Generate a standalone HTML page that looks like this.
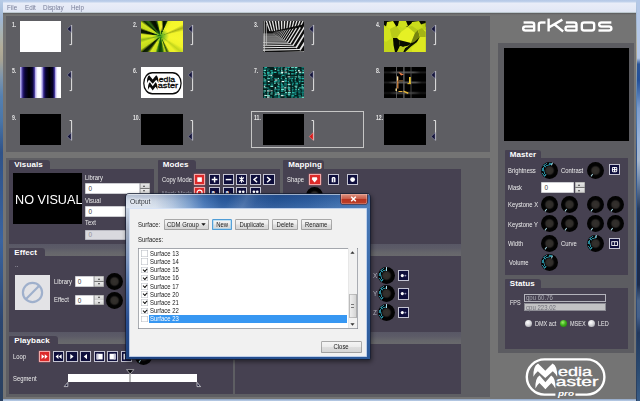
<!DOCTYPE html>
<html>
<head>
<meta charset="utf-8">
<title>MediaMaster</title>
<style>
html,body{margin:0;padding:0;}
body{width:640px;height:401px;overflow:hidden;position:relative;background:#6d6d6d;font-family:"Liberation Sans",sans-serif;font-size:7px;color:#eee;}
.a{position:absolute;}
#desk{left:0;top:0;width:640px;height:401px;background:linear-gradient(180deg,#b7cbe6 0%,#9fb6d4 5%,#a9b4b4 8%,#b3ad98 12%,#a8a494 15%,#7f96ac 19%,#5580b0 24%,#4a76a8 30%,#2f5288 38%,#335a94 48%,#3a64a0 60%,#33568a 70%,#2b4670 80%,#2a4468 88%,#2a4060 100%);}
#deskr{left:636.5px;top:0;width:3.5px;height:401px;background:linear-gradient(180deg,#b4c8e8 0%,#b4c8e8 14.5%,#2a5496 16%,#23509a 20%,#4670b0 23%,#7c9ccc 27%,#9ab4d8 35%,#a8b8cc 40%,#7088a8 45%,#283c5c 52%,#1c2c4c 62%,#1c2c4c 71%,#4a6488 75%,#44608a 79%,#22385c 83%,#2a4a70 92%,#3a5c86 100%);}
#frame{left:2.8px;top:0;width:633.7px;height:401px;background:#747474;}
#win{left:2.8px;top:12.5px;width:633.7px;height:386.7px;background:linear-gradient(180deg,#58585a 0,#6e6e6e 1.2px,#747474 2.2px,#747474 100%);}
#menubar{z-index:2;left:2.8px;top:0;width:633.7px;height:12.5px;background:linear-gradient(180deg,#b4c8e6 0,#c2d3ec 2px,#e9edf8 3px,#e4e9f6 9px,#dfe5f3 12px,#9aa 13px);}
#menubar span{position:absolute;top:3.8px;font-size:7px;line-height:8px;color:#777d98;transform-origin:0 50%;transform:scaleX(.9);}
.panel{background:#5e5e63;}
.body{background:#464151;}
.tab{background:#464151;border-radius:1px 3px 0 0;height:8.5px;}
.tab b{position:absolute;left:5.2px;top:0px;font-size:8px;line-height:9px;color:#fff;white-space:nowrap;letter-spacing:.12px;}
.num{font-size:6.6px;font-weight:bold;line-height:8px;color:#e6e6e6;white-space:nowrap;transform-origin:0 50%;transform:scaleX(.78);}
.lbl{white-space:nowrap;font-size:7px;line-height:8px;color:#ececec;transform-origin:0 50%;transform:scaleX(.84);}

.tab{height:9.3px !important;}
.inp{background:#fff;box-shadow:inset 0 0 0 .5px #9a9aa4;}
.inp i{position:absolute;left:3.2px;top:50%;margin-top:-3.4px;font-style:normal;font-size:6.4px;line-height:8px;color:#3a3a3a;}
.inp.dis{background:#d9d9de;} .inp.dis i{color:#909098;}
.spin{background:linear-gradient(180deg,#ececec 0,#cfcfcf 47%,#777 48%,#777 52%,#ececec 53%,#cdcdcd 100%);box-shadow:inset 0 0 0 .5px #8a8a8a;}
.spin:before,.spin:after{content:"";position:absolute;left:50%;margin-left:-1.5px;border:1.5px solid transparent;}
.spin:before{top:0.2px;border-bottom:2px solid #444;border-top:0;margin-top:1.4px}
.spin:after{bottom:1.6px;border-top:2px solid #444;border-bottom:0;}
.btn{width:9.2px;height:9.2px;background:#0e0e3c;border:.7px solid #c4c4d2;box-sizing:content-box;}
.btn.red{background:#dc2a2a;border-color:#f4a8a8;box-shadow:0 0 1.5px rgba(255,120,120,.8);}
.btn svg{position:absolute;left:0;top:0;width:9.2px;height:9.2px;}
.knob{width:17px;height:17px;border-radius:50%;--v:0;background:
 radial-gradient(circle at 50% 50%,#34312e 0,#2f2c29 3.4px,#0b0b0b 4.8px,rgba(8,8,8,0) 5.4px),
 radial-gradient(circle at 50% 50%,rgba(3,3,3,0) 7.7px,#030303 8.1px),
 repeating-conic-gradient(from 215deg,rgba(3,3,3,0) 0deg,rgba(3,3,3,0) 5deg,#030303 6deg,#030303 9deg,rgba(3,3,3,0) 10deg),
 conic-gradient(from 215deg,#27889a 0deg,#27889a calc(var(--v)*290deg),#030303 calc(var(--v)*290deg + 1deg),#030303 360deg);}
.knob.np:after{display:none}
.knob:after{content:"";position:absolute;left:8px;top:.6px;width:1px;height:3.4px;background:#a8d8e6;transform-origin:.5px 7.9px;transform:rotate(calc(215deg + var(--v)*290deg));}

#dlg{left:126.2px;top:193.7px;width:243.6px;height:165.7px;border-radius:3.2px 3.2px 1.2px 1.2px;box-shadow:0 0 0 .7px rgba(20,30,52,.95),1px 2px 4px 1px rgba(0,0,0,.45);overflow:hidden;
 background:linear-gradient(180deg,rgba(10,30,80,.22) 0,rgba(10,30,80,.06) 7px,rgba(255,255,255,.06) 14px,rgba(255,255,255,0) 15px),linear-gradient(90deg,#dfe7f2 0,#d9e2ee 12%,#b4c8e2 19%,#7fa3d0 26%,#4a7aba 32%,#2e5fa2 39%,#27569a 50%,#285798 62%,#2f60a2 75%,#3f70b0 88%,#4a7ab6 100%);}
#dlg .lb{left:0;top:14px;width:4px;bottom:0;background:linear-gradient(180deg,#cdd8e8 0,#a4aec0 15%,#7c94bc 35%,#4a6eaa 55%,#2a4e90 75%,#1d417c 100%);}
#dlg .bb{left:0;bottom:0;width:100%;height:4px;background:linear-gradient(90deg,#1d417c 0,#214788 30%,#265090 60%,#2c5a9a 100%);}
#dlg .rb{right:0;top:14px;width:4px;bottom:0;background:linear-gradient(180deg,#4a7ab6 0,#3c6cac 40%,#2c5a9a 100%);}
#dlg .hl{left:0;top:0;width:100%;height:1px;background:rgba(255,255,255,.55);}
#dlg .gl{left:70px;top:0;width:110px;height:14.6px;background:linear-gradient(115deg,rgba(255,255,255,0) 30%,rgba(255,255,255,.16) 45%,rgba(255,255,255,.05) 55%,rgba(255,255,255,0) 70%);}
#cl{left:129.9px;top:209px;width:236.2px;height:146.7px;background:#f1f1f1;box-shadow:0 0 0 .9px rgba(214,228,248,.95);}
.dt{white-space:nowrap;font-size:7px;line-height:8px;color:#1c1c1c;transform-origin:0 50%;transform:scaleX(.85);}
.pb{background:linear-gradient(180deg,#f6f6f6 0,#ececec 48%,#dedede 52%,#d4d4d4 100%);border-radius:1.6px;box-shadow:inset 0 0 0 .7px #8e8e8e;}
.pb span{position:absolute;left:0;width:117.6%;text-align:center;top:50%;margin-top:-3.5px;font-size:7px;line-height:8px;color:#1c1c1c;transform-origin:0 50%;transform:scaleX(.85);white-space:nowrap;}
.pb.def{box-shadow:inset 0 0 0 .7px #3c8ccc,inset 0 0 0 1.5px #8fd0f4;}
.cb{width:6.6px;height:6.6px;background:#fff;box-shadow:inset 0 0 0 .6px #b8bcc4;}
.cb.on:after{content:"";position:absolute;left:1.5px;top:1px;width:3.4px;height:1.9px;border-left:1.3px solid #111;border-bottom:1.3px solid #111;transform:rotate(-48deg);transform-origin:50% 50%;}
</style>
</head>
<body>
<div id="desk" class="a"></div><div id="deskr" class="a"></div>
<div id="frame" class="a"></div>
<div class="a" style="left:2.8px;top:399.2px;width:633.7px;height:1.8px;background:linear-gradient(180deg,#8fa4c4,#bcd0ea);"></div>
<div id="menubar" class="a"><span style="left:4.5px">File</span><span style="left:22px">Edit</span><span style="left:40.5px">Display</span><span style="left:68.5px">Help</span></div>
<div id="win" class="a"></div>

<!-- top grid panel -->
<div class="a panel" id="grid" style="left:5.8px;top:16px;width:484.5px;height:135.8px;"></div>

<!-- thumbnails -->
<div class="a" style="left:251.3px;top:111.3px;width:110.6px;height:34.8px;border:1px solid #c6c6c6;"></div>
<div class="a" style="left:20.2px;top:21px;width:41.3px;height:31.2px;"><span class="a num" style="left:-8.7px;top:0.2px;">1.</span><div class="a" style="left:0;top:0;width:41.3px;height:31.2px;overflow:hidden;"><div class="a" style="left:0;top:0;width:100%;height:100%;background:#fff"></div></div><svg class="a" style="left:45.4px;top:3px" width="8" height="22" viewBox="0 0 8 22"><path d="M5.6 1 V20.6 H3.6" fill="none" stroke="#e4e4e4" stroke-width="1"/><path d="M5.2 1.2 L1.2 5 L5.2 8.6Z" fill="#14143a" stroke="#9a9ab4" stroke-width=".5"/></svg></div>
<div class="a" style="left:141.3px;top:21px;width:41.3px;height:31.2px;"><span class="a num" style="left:-8.7px;top:0.2px;">2.</span><div class="a" style="left:0;top:0;width:41.3px;height:31.2px;overflow:hidden;"><div class="a" style="left:0;top:0;width:100%;height:100%;background:conic-gradient(from 0deg at 47% 48%,#e4ee20 0deg,#b9d21a 4deg,#0b1a02 9deg,#050c00 17deg,#10300a 22deg,#dfe91f 27deg,#f4f62a 40deg,#f6f72c 62deg,#a9b416 70deg,#f2f52a 78deg,#f6f72c 100deg,#eff329 118deg,#c3d61c 128deg,#eef228 138deg,#e8ef26 150deg,#274f0b 158deg,#c9e01e 165deg,#1a5a0e 174deg,#0f3a08 184deg,#2c7214 192deg,#c9e01e 199deg,#dcea22 212deg,#132a04 221deg,#0a1802 228deg,#c4dc1c 236deg,#d4e820 250deg,#8fb414 258deg,#d8ea20 266deg,#dcec22 274deg,#091a02 280deg,#060f00 287deg,#c0da1c 293deg,#d2e61e 304deg,#0c2a06 311deg,#2e6a12 319deg,#081602 327deg,#040a00 338deg,#1c4a0c 344deg,#d0e21c 350deg,#e4ee20 360deg)"></div><div class="a" style="left:0;top:0;width:100%;height:100%;background:radial-gradient(ellipse 20% 24% at 47% 48%,rgba(46,150,34,.9),rgba(46,150,34,.35) 60%,rgba(40,140,30,0))"></div><div class="a" style="left:19px;top:1px;width:3px;height:9px;background:radial-gradient(ellipse at 50% 50%,rgba(250,240,60,.95),rgba(250,240,60,0))"></div></div><svg class="a" style="left:45.4px;top:3px" width="8" height="22" viewBox="0 0 8 22"><path d="M5.6 1 V20.6 H3.6" fill="none" stroke="#e4e4e4" stroke-width="1"/><path d="M5.2 1.2 L1.2 5 L5.2 8.6Z" fill="#14143a" stroke="#9a9ab4" stroke-width=".5"/></svg></div>
<div class="a" style="left:262.9px;top:21px;width:41.3px;height:31.2px;"><span class="a num" style="left:-8.7px;top:0.2px;">3.</span><div class="a" style="left:0;top:0;width:41.3px;height:31.2px;overflow:hidden;"><svg class="a" style="left:0;top:0" width="41.7" height="31.2" viewBox="0 0 41.7 31.2"><rect width="41.7" height="31.2" fill="#0c0c0c"/><path d="M2.60 0 L4.05 0 L7.60 10.5 L6.50 10.5Z" fill="#e2e2e2"/><path d="M5.65 0 L7.10 0 L9.95 10.5 L8.85 10.5Z" fill="#e2e2e2"/><path d="M8.70 0 L10.15 0 L12.30 10.5 L11.20 10.5Z" fill="#e2e2e2"/><path d="M11.75 0 L13.20 0 L14.65 10.5 L13.55 10.5Z" fill="#e2e2e2"/><path d="M14.80 0 L16.25 0 L17.00 10.5 L15.90 10.5Z" fill="#e2e2e2"/><path d="M17.85 0 L19.30 0 L19.35 10.5 L18.25 10.5Z" fill="#e2e2e2"/><path d="M20.90 0 L22.35 0 L21.70 10.5 L20.60 10.5Z" fill="#e2e2e2"/><path d="M23.95 0 L25.40 0 L24.05 10.5 L22.95 10.5Z" fill="#e2e2e2"/><path d="M27.00 0 L28.45 0 L26.40 10.5 L25.30 10.5Z" fill="#e2e2e2"/><path d="M30.05 0 L31.50 0 L28.75 10.5 L27.65 10.5Z" fill="#e2e2e2"/><path d="M33.10 0 L34.55 0 L31.10 10.5 L30.00 10.5Z" fill="#e2e2e2"/><path d="M36.15 0 L37.60 0 L33.45 10.5 L32.35 10.5Z" fill="#e2e2e2"/><path d="M39.20 0 L40.65 0 L35.80 10.5 L34.70 10.5Z" fill="#e2e2e2"/><path d="M0 9.6 L9 10.4 L41.7 3 L41.7 31.2 L0 31.2Z" fill="#0c0c0c"/><path d="M-1.00 35.28 L47.01 34.35" stroke="#ececec" stroke-width="1.54" fill="none"/><path d="M47.01 34.35 L66.93 2.22" stroke="#e6e6e6" stroke-width="2.47" fill="none" stroke-linecap="square"/><path d="M-1.00 32.00 L41.70 31.20" stroke="#ececec" stroke-width="1.34" fill="none"/><path d="M41.70 31.20 L58.87 3.50" stroke="#e6e6e6" stroke-width="2.15" fill="none" stroke-linecap="square"/><path d="M-1.00 29.23 L37.22 28.54" stroke="#ececec" stroke-width="1.18" fill="none"/><path d="M37.22 28.54 L52.07 4.58" stroke="#e6e6e6" stroke-width="1.88" fill="none" stroke-linecap="square"/><path d="M-1.00 26.88 L33.40 26.27" stroke="#ececec" stroke-width="1.04" fill="none"/><path d="M33.40 26.27 L46.28 5.50" stroke="#e6e6e6" stroke-width="1.65" fill="none" stroke-linecap="square"/><path d="M-1.00 24.82 L30.08 24.30" stroke="#ececec" stroke-width="0.91" fill="none"/><path d="M30.08 24.30 L41.24 6.30" stroke="#e6e6e6" stroke-width="1.45" fill="none" stroke-linecap="square"/><path d="M-1.00 23.08 L27.26 22.63" stroke="#ececec" stroke-width="0.81" fill="none"/><path d="M27.26 22.63 L36.96 6.98" stroke="#e6e6e6" stroke-width="1.28" fill="none" stroke-linecap="square"/><path d="M-1.00 21.54 L24.77 21.15" stroke="#ececec" stroke-width="0.72" fill="none"/><path d="M24.77 21.15 L33.18 7.58" stroke="#e6e6e6" stroke-width="1.13" fill="none" stroke-linecap="square"/><path d="M-1.00 20.21 L22.61 19.87" stroke="#ececec" stroke-width="0.64" fill="none"/><path d="M22.61 19.87 L29.91 8.10" stroke="#e6e6e6" stroke-width="1.00" fill="none" stroke-linecap="square"/><path d="M-1.00 19.09 L20.78 18.79" stroke="#ececec" stroke-width="0.57" fill="none"/><path d="M20.78 18.79 L27.14 8.54" stroke="#e6e6e6" stroke-width="0.89" fill="none" stroke-linecap="square"/><path d="M-1.00 18.06 L19.12 17.80" stroke="#ececec" stroke-width="0.51" fill="none"/><path d="M19.12 17.80 L24.62 8.94" stroke="#e6e6e6" stroke-width="0.79" fill="none" stroke-linecap="square"/><path d="M-1.00 17.14 L17.63 16.92" stroke="#ececec" stroke-width="0.46" fill="none"/><path d="M17.63 16.92 L22.35 9.30" stroke="#e6e6e6" stroke-width="0.70" fill="none" stroke-linecap="square"/><path d="M-1.00 16.32 L16.30 16.13" stroke="#ececec" stroke-width="0.41" fill="none"/><path d="M16.30 16.13 L20.34 9.62" stroke="#e6e6e6" stroke-width="0.62" fill="none" stroke-linecap="square"/><path d="M-1.00 15.60 L15.14 15.44" stroke="#ececec" stroke-width="0.36" fill="none"/><path d="M15.14 15.44 L18.57 9.90" stroke="#e6e6e6" stroke-width="0.55" fill="none" stroke-linecap="square"/><path d="M-1.00 14.88 L13.98 14.75" stroke="#ececec" stroke-width="0.32" fill="none"/><path d="M13.98 14.75 L16.81 10.18" stroke="#e6e6e6" stroke-width="0.48" fill="none" stroke-linecap="square"/><path d="M-1.00 14.27 L12.98 14.16" stroke="#ececec" stroke-width="0.28" fill="none"/><path d="M12.98 14.16 L15.30 10.42" stroke="#e6e6e6" stroke-width="0.42" fill="none" stroke-linecap="square"/><path d="M-1.00 13.65 L11.99 13.57" stroke="#ececec" stroke-width="0.25" fill="none"/><path d="M11.99 13.57 L13.79 10.66" stroke="#e6e6e6" stroke-width="0.36" fill="none" stroke-linecap="square"/><path d="M-1.00 13.14 L11.16 13.08" stroke="#ececec" stroke-width="0.22" fill="none"/><path d="M11.16 13.08 L12.53 10.86" stroke="#e6e6e6" stroke-width="0.31" fill="none" stroke-linecap="square"/><path d="M-1.00 12.63 L10.33 12.58" stroke="#ececec" stroke-width="0.19" fill="none"/><path d="M10.33 12.58 L11.27 11.06" stroke="#e6e6e6" stroke-width="0.26" fill="none" stroke-linecap="square"/><path d="M1.2 0V31.2" stroke="#ddd" stroke-width=".9"/><path d="M3.4 3V24" stroke="#ccc" stroke-width=".7"/></svg></div><svg class="a" style="left:45.4px;top:3px" width="8" height="22" viewBox="0 0 8 22"><path d="M5.6 1 V20.6 H3.6" fill="none" stroke="#e4e4e4" stroke-width="1"/><path d="M5.2 1.2 L1.2 5 L5.2 8.6Z" fill="#14143a" stroke="#9a9ab4" stroke-width=".5"/></svg></div>
<div class="a" style="left:384.3px;top:21px;width:41.3px;height:31.2px;"><span class="a num" style="left:-8.7px;top:0.2px;">4.</span><div class="a" style="left:0;top:0;width:41.3px;height:31.2px;overflow:hidden;"><svg class="a" style="left:0;top:0" width="41.7" height="31.2" viewBox="0 0 41.7 31.2"><rect width="41.7" height="31.2" fill="#c6da1c"/>
<polygon points="0,0 41.7,0 41.7,6 38,3 33,7 28,2 23,6 17,2 12,6 7,2 3,6 0,4" fill="#050800"/>
<polygon points="3,1 9,0 12,5 6,8 2,6" fill="#dbe81e"/><polygon points="15,0 22,0 24,5 18,7 14,4" fill="#cfe01c"/><polygon points="28,1 35,0 38,5 32,8 27,5" fill="#cbdc1c"/><polygon points="38,3 41.7,2 41.7,9 39,8" fill="#b9cb18"/>
<polygon points="0,6 6,8 8,17 2,21 0,20" fill="#d2e31e"/><polygon points="6,8 12,5 17,11 13,17 8,17" fill="#b9ca18"/>
<polygon points="17,11 24,6 31,12 27,22 15,19 13,17" fill="#e6f024"/><polygon points="24,6 28,5 34,9 31,12" fill="#b6c818"/>
<polygon points="31,12 34,9 36,16 30,21 27,22" fill="#76840e"/>
<polygon points="9,17 13,17 15,19 16,25 13,31.2 11,31.2 9.5,24" fill="#080a00"/><polygon points="15,19 27,22 25,24.5 19,26 16,25" fill="#0a0c00"/>
<polygon points="27,22 30,21 36,16 33,21 27,25.5 21,31.2 19,31.2 21,27 25,24.5" fill="#0c1000"/><polygon points="16,25 19,26 25,24.5 21,27 19,31.2 13,31.2" fill="#b9cb18"/>
<polygon points="34,9 41.7,9 41.7,31.2 28,31.2 27,27 33,22 36,16" fill="#dde820"/>
<polygon points="34,9 38,7 41.7,11 41.7,16 36,16" fill="#a4b414"/>
<polygon points="0,20 2,21 8,17 7,24 9,31.2 0,31.2" fill="#c3d51a"/><polygon points="22,31.2 27,27 28,31.2" fill="#d0e01e"/>
</svg></div><svg class="a" style="left:45.4px;top:3px" width="8" height="22" viewBox="0 0 8 22"><path d="M5.6 1 V20.6 H3.6" fill="none" stroke="#e4e4e4" stroke-width="1"/><path d="M5.2 1.2 L1.2 5 L5.2 8.6Z" fill="#14143a" stroke="#9a9ab4" stroke-width=".5"/></svg></div>
<div class="a" style="left:20.2px;top:67px;width:41.3px;height:31.2px;"><span class="a num" style="left:-8.7px;top:0.2px;">5.</span><div class="a" style="left:0;top:0;width:41.3px;height:31.2px;overflow:hidden;"><div class="a" style="left:0;top:0;width:100%;height:100%;background:linear-gradient(90deg,#c9c4f0 0,#8f86d6 3%,#2a1c7a 7%,#0a0434 12%,#000 22%,#05022a 30%,#3a2c90 35%,#c0b8f0 38%,#fbfbff 43%,#fbfbff 50%,#b8b0ec 54%,#2e2088 58%,#08032c 63%,#000 72%,#06022c 80%,#3a2c92 84%,#c4bcf2 87%,#fcfcff 91%,#fff 100%)"></div></div><svg class="a" style="left:45.4px;top:3px" width="8" height="22" viewBox="0 0 8 22"><path d="M5.6 1 V20.6 H3.6" fill="none" stroke="#e4e4e4" stroke-width="1"/><path d="M5.2 1.2 L1.2 5 L5.2 8.6Z" fill="#14143a" stroke="#9a9ab4" stroke-width=".5"/></svg></div>
<div class="a" style="left:141.3px;top:67px;width:41.3px;height:31.2px;"><span class="a num" style="left:-8.7px;top:0.2px;">6.</span><div class="a" style="left:0;top:0;width:41.3px;height:31.2px;overflow:hidden;"><div class="a" style="left:0;top:0;width:100%;height:100%;background:#fff"></div><svg class="a" style="left:0;top:0" width="41.7" height="31.2" viewBox="0 0 41.7 31.2"><g transform="translate(.47,3.1) scale(.481,.598)">
<rect x="4.8" y="4.4" width="77.6" height="35.2" rx="17.6" fill="#fff" stroke="#0a0a0a" stroke-width="2.6"/>
<path d="M11.4 21.8 Q11 11.2 16 8.6 Q19.6 12 23.3 15.8 Q27 12 30.6 8.6 Q35.6 11.2 35.2 21.8 Q33.4 18.4 30.8 16.2 Q27 19.6 23.3 23 Q19.6 19.6 15.8 16.2 Q13.2 18.4 11.4 21.8Z" fill="#0a0a0a"/>
<path d="M13.4 33.4 Q13 23 17.6 20.4 Q20.4 23.6 23.4 27.2 Q26.4 23.6 29.2 20.4 Q33.8 23 33.4 33.4 Q31.8 30.2 29.4 28 Q26.4 31 23.4 34.2 Q20.4 31 17.4 28 Q15 30.2 13.4 33.4Z" fill="#0a0a0a"/>
<text x="36" y="20.6" font-family="Liberation Sans" font-size="13.4" fill="#0a0a0a" stroke="#0a0a0a" stroke-width=".5" textLength="34" lengthAdjust="spacingAndGlyphs">edia</text>
<text x="33.8" y="30.7" font-family="Liberation Sans" font-size="13.4" fill="#0a0a0a" stroke="#0a0a0a" stroke-width=".5" textLength="42.6" lengthAdjust="spacingAndGlyphs">aster</text></g></svg></div><svg class="a" style="left:45.4px;top:3px" width="8" height="22" viewBox="0 0 8 22"><path d="M5.6 1 V20.6 H3.6" fill="none" stroke="#e4e4e4" stroke-width="1"/><path d="M5.2 1.2 L1.2 5 L5.2 8.6Z" fill="#14143a" stroke="#9a9ab4" stroke-width=".5"/></svg></div>
<div class="a" style="left:262.9px;top:67px;width:41.3px;height:31.2px;"><span class="a num" style="left:-8.7px;top:0.2px;">7.</span><div class="a" style="left:0;top:0;width:41.3px;height:31.2px;overflow:hidden;"><svg class="a" style="left:0;top:0" width="41.7" height="31.2" viewBox="0 0 41.7 31.2"><rect width="41.7" height="31.2" fill="#04201e"/><rect x="1.3" y="0.0" width="2.8" height="1.1" fill="#25b4a6"/><rect x="0.5" y="1.6" width="2.8" height="0.9" fill="#25b4a6"/><rect x="0.5" y="3.1" width="2.6" height="0.9" fill="#6fe8d4"/><rect x="0.5" y="4.7" width="1.8" height="1.3" fill="#25b4a6"/><rect x="1.3" y="6.2" width="1.4" height="1.1" fill="#6fe8d4"/><rect x="0.5" y="7.8" width="2.8" height="1.3" fill="#25b4a6"/><rect x="0.5" y="10.9" width="1.4" height="0.9" fill="#25b4a6"/><rect x="0.5" y="12.5" width="2.8" height="1.1" fill="#6fe8d4"/><rect x="0.5" y="14.0" width="2.8" height="1.3" fill="#128079"/><rect x="1.3" y="15.6" width="2.2" height="0.9" fill="#128079"/><rect x="0.8" y="17.2" width="2.6" height="1.1" fill="#25b4a6"/><rect x="0.8" y="18.7" width="1.4" height="1.1" fill="#e0fff6"/><rect x="0.8" y="20.3" width="2.8" height="0.9" fill="#6fe8d4"/><rect x="0.5" y="23.4" width="2.6" height="1.1" fill="#6fe8d4"/><rect x="0.5" y="25.0" width="1.4" height="0.9" fill="#128079"/><rect x="1.3" y="26.5" width="1.4" height="1.1" fill="#128079"/><rect x="1.3" y="28.1" width="2.6" height="0.9" fill="#e0fff6"/><rect x="0.8" y="29.6" width="1.8" height="1.1" fill="#25b4a6"/><rect x="4.0" y="1.6" width="2.6" height="0.9" fill="#128079"/><rect x="4.0" y="3.1" width="1.4" height="0.9" fill="#128079"/><rect x="4.0" y="4.7" width="2.6" height="1.3" fill="#25b4a6"/><rect x="4.0" y="6.2" width="2.6" height="1.3" fill="#25b4a6"/><rect x="4.8" y="7.8" width="2.6" height="0.9" fill="#6fe8d4"/><rect x="4.0" y="9.4" width="1.8" height="1.1" fill="#128079"/><rect x="4.2" y="10.9" width="2.8" height="0.9" fill="#6fe8d4"/><rect x="4.0" y="12.5" width="2.6" height="0.9" fill="#128079"/><rect x="4.8" y="14.0" width="1.8" height="1.1" fill="#e0fff6"/><rect x="4.8" y="17.2" width="2.2" height="0.9" fill="#25b4a6"/><rect x="4.0" y="20.3" width="1.8" height="1.3" fill="#128079"/><rect x="4.8" y="21.8" width="2.8" height="0.9" fill="#128079"/><rect x="4.0" y="23.4" width="2.6" height="1.1" fill="#e0fff6"/><rect x="4.2" y="25.0" width="1.8" height="0.9" fill="#128079"/><rect x="4.0" y="26.5" width="1.8" height="0.9" fill="#6fe8d4"/><rect x="4.0" y="28.1" width="2.8" height="1.3" fill="#6fe8d4"/><rect x="4.0" y="29.6" width="2.6" height="1.1" fill="#e0fff6"/><rect x="7.4" y="3.1" width="2.2" height="1.3" fill="#25b4a6"/><rect x="8.2" y="4.7" width="2.2" height="1.3" fill="#25b4a6"/><rect x="7.4" y="6.2" width="2.8" height="1.3" fill="#25b4a6"/><rect x="7.4" y="7.8" width="1.8" height="1.1" fill="#e0fff6"/><rect x="7.4" y="9.4" width="2.8" height="1.1" fill="#25b4a6"/><rect x="7.4" y="10.9" width="1.8" height="0.9" fill="#128079"/><rect x="7.4" y="12.5" width="2.6" height="0.9" fill="#128079"/><rect x="7.4" y="15.6" width="2.8" height="0.9" fill="#128079"/><rect x="7.7" y="17.2" width="2.6" height="1.3" fill="#128079"/><rect x="7.4" y="18.7" width="2.8" height="1.3" fill="#6fe8d4"/><rect x="7.4" y="23.4" width="2.2" height="0.9" fill="#e0fff6"/><rect x="8.2" y="25.0" width="1.4" height="0.9" fill="#25b4a6"/><rect x="7.4" y="26.5" width="2.2" height="0.9" fill="#6fe8d4"/><rect x="7.4" y="29.6" width="1.4" height="1.1" fill="#25b4a6"/><rect x="10.9" y="0.0" width="2.6" height="1.1" fill="#128079"/><rect x="11.7" y="1.6" width="1.4" height="1.3" fill="#e0fff6"/><rect x="10.9" y="4.7" width="2.6" height="1.3" fill="#25b4a6"/><rect x="11.2" y="10.9" width="2.6" height="1.1" fill="#128079"/><rect x="11.7" y="12.5" width="2.8" height="1.1" fill="#e0fff6"/><rect x="10.9" y="14.0" width="2.8" height="1.3" fill="#25b4a6"/><rect x="11.2" y="15.6" width="1.4" height="1.3" fill="#6fe8d4"/><rect x="11.7" y="20.3" width="1.4" height="1.3" fill="#e0fff6"/><rect x="11.2" y="21.8" width="2.6" height="0.9" fill="#25b4a6"/><rect x="10.9" y="23.4" width="1.8" height="1.3" fill="#128079"/><rect x="11.7" y="25.0" width="2.2" height="1.1" fill="#128079"/><rect x="11.7" y="26.5" width="2.2" height="1.3" fill="#6fe8d4"/><rect x="10.9" y="28.1" width="2.6" height="0.9" fill="#128079"/><rect x="11.2" y="29.6" width="2.8" height="0.9" fill="#128079"/><rect x="14.6" y="0.0" width="2.6" height="0.9" fill="#128079"/><rect x="14.3" y="1.6" width="2.2" height="0.9" fill="#25b4a6"/><rect x="14.3" y="3.1" width="2.2" height="1.1" fill="#25b4a6"/><rect x="15.1" y="4.7" width="2.8" height="1.3" fill="#128079"/><rect x="15.1" y="6.2" width="2.8" height="1.1" fill="#128079"/><rect x="14.6" y="10.9" width="1.4" height="1.3" fill="#6fe8d4"/><rect x="14.3" y="12.5" width="2.8" height="1.3" fill="#128079"/><rect x="14.3" y="14.0" width="2.6" height="0.9" fill="#128079"/><rect x="14.3" y="15.6" width="2.2" height="0.9" fill="#6fe8d4"/><rect x="15.1" y="17.2" width="1.4" height="0.9" fill="#6fe8d4"/><rect x="14.3" y="18.7" width="2.2" height="1.3" fill="#25b4a6"/><rect x="14.6" y="20.3" width="2.6" height="0.9" fill="#128079"/><rect x="14.3" y="21.8" width="2.6" height="0.9" fill="#25b4a6"/><rect x="14.3" y="23.4" width="2.2" height="1.1" fill="#128079"/><rect x="14.3" y="25.0" width="1.8" height="1.1" fill="#6fe8d4"/><rect x="14.3" y="26.5" width="2.6" height="1.1" fill="#e0fff6"/><rect x="15.1" y="28.1" width="1.4" height="1.3" fill="#25b4a6"/><rect x="14.6" y="29.6" width="2.8" height="1.1" fill="#25b4a6"/><rect x="17.8" y="0.0" width="1.8" height="1.3" fill="#128079"/><rect x="17.8" y="1.6" width="1.4" height="0.9" fill="#6fe8d4"/><rect x="18.1" y="3.1" width="1.4" height="1.3" fill="#6fe8d4"/><rect x="18.1" y="4.7" width="2.2" height="1.3" fill="#e0fff6"/><rect x="17.8" y="6.2" width="2.2" height="0.9" fill="#6fe8d4"/><rect x="18.6" y="7.8" width="2.8" height="1.1" fill="#25b4a6"/><rect x="17.8" y="9.4" width="1.4" height="0.9" fill="#25b4a6"/><rect x="17.8" y="10.9" width="1.4" height="1.3" fill="#25b4a6"/><rect x="18.6" y="12.5" width="1.8" height="0.9" fill="#128079"/><rect x="18.6" y="14.0" width="2.8" height="1.1" fill="#e0fff6"/><rect x="17.8" y="15.6" width="1.4" height="1.1" fill="#25b4a6"/><rect x="17.8" y="17.2" width="2.2" height="1.3" fill="#25b4a6"/><rect x="18.1" y="18.7" width="2.8" height="1.1" fill="#25b4a6"/><rect x="17.8" y="20.3" width="2.8" height="1.1" fill="#25b4a6"/><rect x="18.1" y="21.8" width="2.8" height="1.3" fill="#6fe8d4"/><rect x="17.8" y="23.4" width="2.6" height="1.3" fill="#25b4a6"/><rect x="17.8" y="26.5" width="2.8" height="1.3" fill="#128079"/><rect x="17.8" y="28.1" width="2.8" height="1.1" fill="#e0fff6"/><rect x="22.0" y="0.0" width="2.8" height="1.1" fill="#128079"/><rect x="21.5" y="1.6" width="2.6" height="0.9" fill="#e0fff6"/><rect x="21.5" y="3.1" width="1.8" height="1.1" fill="#25b4a6"/><rect x="21.5" y="4.7" width="2.6" height="0.9" fill="#e0fff6"/><rect x="21.2" y="6.2" width="2.8" height="1.1" fill="#128079"/><rect x="21.2" y="7.8" width="1.4" height="0.9" fill="#128079"/><rect x="21.5" y="9.4" width="1.4" height="1.1" fill="#128079"/><rect x="22.0" y="10.9" width="1.8" height="0.9" fill="#6fe8d4"/><rect x="21.2" y="12.5" width="2.8" height="1.3" fill="#25b4a6"/><rect x="22.0" y="14.0" width="1.8" height="0.9" fill="#25b4a6"/><rect x="21.2" y="15.6" width="2.6" height="1.3" fill="#128079"/><rect x="21.2" y="17.2" width="2.8" height="1.3" fill="#128079"/><rect x="21.2" y="18.7" width="2.8" height="0.9" fill="#128079"/><rect x="21.2" y="20.3" width="2.2" height="1.1" fill="#e0fff6"/><rect x="21.2" y="21.8" width="1.8" height="0.9" fill="#25b4a6"/><rect x="21.2" y="23.4" width="1.8" height="0.9" fill="#6fe8d4"/><rect x="22.0" y="25.0" width="2.2" height="0.9" fill="#6fe8d4"/><rect x="21.2" y="26.5" width="2.6" height="0.9" fill="#25b4a6"/><rect x="21.2" y="28.1" width="1.4" height="0.9" fill="#25b4a6"/><rect x="21.5" y="29.6" width="2.2" height="0.9" fill="#25b4a6"/><rect x="24.7" y="0.0" width="2.2" height="0.9" fill="#25b4a6"/><rect x="24.7" y="1.6" width="1.4" height="1.3" fill="#25b4a6"/><rect x="25.5" y="3.1" width="2.8" height="0.9" fill="#25b4a6"/><rect x="24.7" y="4.7" width="1.4" height="0.9" fill="#128079"/><rect x="24.7" y="6.2" width="2.2" height="1.3" fill="#6fe8d4"/><rect x="24.7" y="9.4" width="2.6" height="0.9" fill="#e0fff6"/><rect x="25.5" y="10.9" width="2.6" height="1.3" fill="#128079"/><rect x="25.0" y="12.5" width="1.8" height="0.9" fill="#128079"/><rect x="24.7" y="14.0" width="1.4" height="0.9" fill="#25b4a6"/><rect x="25.0" y="15.6" width="2.2" height="1.1" fill="#25b4a6"/><rect x="24.7" y="17.2" width="2.8" height="0.9" fill="#e0fff6"/><rect x="25.0" y="18.7" width="1.4" height="0.9" fill="#25b4a6"/><rect x="24.7" y="20.3" width="2.6" height="1.3" fill="#6fe8d4"/><rect x="25.0" y="21.8" width="2.2" height="1.1" fill="#25b4a6"/><rect x="25.5" y="23.4" width="1.8" height="0.9" fill="#e0fff6"/><rect x="25.0" y="25.0" width="2.8" height="1.1" fill="#6fe8d4"/><rect x="24.7" y="26.5" width="2.6" height="1.3" fill="#6fe8d4"/><rect x="25.0" y="28.1" width="2.2" height="1.1" fill="#128079"/><rect x="28.1" y="0.0" width="2.8" height="0.9" fill="#6fe8d4"/><rect x="28.4" y="1.6" width="2.2" height="0.9" fill="#128079"/><rect x="28.1" y="3.1" width="2.8" height="1.3" fill="#25b4a6"/><rect x="28.1" y="6.2" width="2.6" height="1.3" fill="#25b4a6"/><rect x="28.1" y="9.4" width="2.8" height="0.9" fill="#128079"/><rect x="28.4" y="10.9" width="1.8" height="1.1" fill="#25b4a6"/><rect x="28.1" y="12.5" width="1.4" height="1.3" fill="#25b4a6"/><rect x="28.4" y="14.0" width="1.4" height="1.1" fill="#128079"/><rect x="28.9" y="15.6" width="2.2" height="1.3" fill="#128079"/><rect x="28.9" y="17.2" width="1.4" height="1.3" fill="#25b4a6"/><rect x="28.9" y="20.3" width="1.4" height="0.9" fill="#25b4a6"/><rect x="28.9" y="21.8" width="1.8" height="1.3" fill="#128079"/><rect x="28.9" y="23.4" width="1.4" height="1.1" fill="#25b4a6"/><rect x="28.9" y="25.0" width="2.8" height="1.3" fill="#25b4a6"/><rect x="28.4" y="26.5" width="2.8" height="1.1" fill="#128079"/><rect x="28.4" y="28.1" width="2.8" height="1.3" fill="#25b4a6"/><rect x="28.1" y="29.6" width="2.2" height="0.9" fill="#25b4a6"/><rect x="31.6" y="0.0" width="2.8" height="1.3" fill="#6fe8d4"/><rect x="31.6" y="1.6" width="2.6" height="1.1" fill="#128079"/><rect x="31.9" y="3.1" width="1.4" height="0.9" fill="#6fe8d4"/><rect x="32.4" y="4.7" width="1.8" height="1.3" fill="#6fe8d4"/><rect x="31.6" y="6.2" width="1.8" height="1.3" fill="#25b4a6"/><rect x="31.6" y="9.4" width="2.6" height="0.9" fill="#6fe8d4"/><rect x="31.6" y="10.9" width="1.4" height="1.3" fill="#25b4a6"/><rect x="31.6" y="12.5" width="1.4" height="0.9" fill="#25b4a6"/><rect x="31.6" y="14.0" width="1.8" height="1.1" fill="#128079"/><rect x="32.4" y="15.6" width="2.6" height="1.3" fill="#25b4a6"/><rect x="32.4" y="17.2" width="2.8" height="1.1" fill="#128079"/><rect x="31.6" y="18.7" width="2.8" height="1.1" fill="#6fe8d4"/><rect x="32.4" y="20.3" width="1.8" height="0.9" fill="#6fe8d4"/><rect x="31.9" y="21.8" width="2.2" height="1.1" fill="#25b4a6"/><rect x="31.6" y="23.4" width="2.8" height="1.3" fill="#128079"/><rect x="31.6" y="25.0" width="1.8" height="0.9" fill="#128079"/><rect x="31.6" y="26.5" width="1.8" height="1.3" fill="#25b4a6"/><rect x="31.6" y="29.6" width="2.6" height="1.3" fill="#128079"/><rect x="35.0" y="1.6" width="2.2" height="0.9" fill="#128079"/><rect x="35.0" y="3.1" width="1.8" height="1.3" fill="#e0fff6"/><rect x="35.8" y="4.7" width="2.6" height="1.1" fill="#e0fff6"/><rect x="35.8" y="6.2" width="2.2" height="1.3" fill="#128079"/><rect x="35.0" y="7.8" width="1.4" height="1.1" fill="#128079"/><rect x="35.0" y="9.4" width="2.8" height="1.1" fill="#6fe8d4"/><rect x="35.8" y="10.9" width="2.2" height="0.9" fill="#25b4a6"/><rect x="35.3" y="12.5" width="2.8" height="1.1" fill="#128079"/><rect x="35.8" y="14.0" width="1.8" height="1.3" fill="#25b4a6"/><rect x="35.8" y="15.6" width="1.4" height="1.1" fill="#128079"/><rect x="35.8" y="20.3" width="2.6" height="1.1" fill="#25b4a6"/><rect x="35.0" y="21.8" width="1.4" height="1.1" fill="#6fe8d4"/><rect x="35.0" y="23.4" width="2.8" height="1.3" fill="#128079"/><rect x="35.3" y="25.0" width="2.2" height="0.9" fill="#128079"/><rect x="35.3" y="26.5" width="2.2" height="0.9" fill="#128079"/><rect x="35.3" y="28.1" width="2.6" height="1.1" fill="#128079"/><rect x="35.8" y="29.6" width="2.2" height="1.1" fill="#25b4a6"/><rect x="38.5" y="0.0" width="2.8" height="0.9" fill="#128079"/><rect x="38.5" y="1.6" width="2.2" height="1.1" fill="#128079"/><rect x="39.2" y="3.1" width="2.8" height="0.9" fill="#25b4a6"/><rect x="39.2" y="4.7" width="2.2" height="1.3" fill="#6fe8d4"/><rect x="38.5" y="6.2" width="2.8" height="0.9" fill="#128079"/><rect x="38.5" y="9.4" width="2.2" height="0.9" fill="#25b4a6"/><rect x="38.5" y="10.9" width="2.8" height="1.3" fill="#25b4a6"/><rect x="39.2" y="12.5" width="1.4" height="0.9" fill="#128079"/><rect x="38.5" y="14.0" width="2.2" height="1.1" fill="#25b4a6"/><rect x="38.5" y="17.2" width="2.2" height="0.9" fill="#6fe8d4"/><rect x="38.5" y="18.7" width="1.8" height="1.3" fill="#25b4a6"/><rect x="38.5" y="20.3" width="2.6" height="1.3" fill="#6fe8d4"/><rect x="38.8" y="21.8" width="2.8" height="1.1" fill="#128079"/><rect x="38.8" y="23.4" width="2.2" height="1.3" fill="#128079"/><rect x="38.5" y="25.0" width="2.6" height="1.3" fill="#128079"/><rect x="39.2" y="26.5" width="1.4" height="1.3" fill="#25b4a6"/><rect x="39.2" y="28.1" width="1.4" height="0.9" fill="#128079"/><rect x="38.5" y="29.6" width="2.8" height="1.3" fill="#6fe8d4"/></svg></div><svg class="a" style="left:45.4px;top:3px" width="8" height="22" viewBox="0 0 8 22"><path d="M5.6 1 V20.6 H3.6" fill="none" stroke="#e4e4e4" stroke-width="1"/><path d="M5.2 1.2 L1.2 5 L5.2 8.6Z" fill="#14143a" stroke="#9a9ab4" stroke-width=".5"/></svg></div>
<div class="a" style="left:384.3px;top:67px;width:41.3px;height:31.2px;"><span class="a num" style="left:-8.7px;top:0.2px;">8.</span><div class="a" style="left:0;top:0;width:41.3px;height:31.2px;overflow:hidden;"><div class="a" style="left:0;top:0;width:100%;height:100%;background:#020202"></div>
<div class="a" style="left:0;top:0;width:100%;height:100%;background:linear-gradient(180deg,rgba(0,0,0,0) 12%,rgba(140,140,140,.65) 17%,rgba(0,0,0,0) 23%,rgba(0,0,0,0) 44%,rgba(140,140,140,.6) 50%,rgba(0,0,0,0) 56%,rgba(0,0,0,0) 78%,rgba(130,130,130,.55) 84%,rgba(0,0,0,0) 90%)"></div>
<div class="a" style="left:0;top:0;width:100%;height:100%;background:radial-gradient(ellipse 40% 90% at 50% 50%,rgba(0,0,0,0) 0,rgba(0,0,0,0) 60%,rgba(0,0,0,.7) 100%)"></div>
<svg class="a" style="left:0;top:0" width="41.7" height="31.2" viewBox="0 0 41.7 31.2"><rect x="12" y="0" width="1" height="31.2" fill="#555"/><rect x="19.3" y="0" width="1.2" height="31.2" fill="#6a6a6a"/><rect x="26.5" y="0" width="1" height="31.2" fill="#4a4a4a"/>
<path d="M14.5 5 L20 7.5 L17 8.5Z" fill="#f08048"/><path d="M13.2 9.5h1.2v12h-1.2z" fill="#e89040"/><path d="M13 9.5h1v4h-1z" fill="#f4e0a0"/><path d="M25 10h1.8v6.5h-1.8z" fill="#e8c838"/><path d="M23.5 16h3.5v1.2h-3.5z" fill="#d8b030"/><path d="M11.5 21.5h1.5v2.5h-1.5z" fill="#f0d890"/><path d="M14.5 24h4v1h-4z" fill="#e8b040"/><path d="M19.5 23.5 L24.5 25.5 L24 27 L19.5 25Z" fill="#e8b838"/><path d="M15 13.5h4v.8h-4z" fill="#c89050"/></svg></div><svg class="a" style="left:45.4px;top:3px" width="8" height="22" viewBox="0 0 8 22"><path d="M5.6 1 V20.6 H3.6" fill="none" stroke="#e4e4e4" stroke-width="1"/><path d="M5.2 1.2 L1.2 5 L5.2 8.6Z" fill="#14143a" stroke="#9a9ab4" stroke-width=".5"/></svg></div>
<div class="a" style="left:20.2px;top:113.7px;width:41.3px;height:31.2px;"><span class="a num" style="left:-8.7px;top:0.2px;">9.</span><div class="a" style="left:0;top:0;width:41.3px;height:31.2px;overflow:hidden;"><div class="a" style="left:0;top:0;width:100%;height:100%;background:#000"></div></div><svg class="a" style="left:45.5px;top:5.5px" width="8" height="23" viewBox="0 0 8 23"><path d="M3.6 1.5 H5.6 V21.4" fill="none" stroke="#e4e4e4" stroke-width="1"/><path d="M5.2 13.6 L1.2 17.6 L5.2 21.2Z" fill="#14143a" stroke="#9a9ab4" stroke-width=".5"/></svg></div>
<div class="a" style="left:141.3px;top:113.7px;width:41.3px;height:31.2px;"><span class="a num" style="left:-8.7px;top:0.2px;">10.</span><div class="a" style="left:0;top:0;width:41.3px;height:31.2px;overflow:hidden;"><div class="a" style="left:0;top:0;width:100%;height:100%;background:#000"></div></div><svg class="a" style="left:45.5px;top:5.5px" width="8" height="23" viewBox="0 0 8 23"><path d="M3.6 1.5 H5.6 V21.4" fill="none" stroke="#e4e4e4" stroke-width="1"/><path d="M5.2 13.6 L1.2 17.6 L5.2 21.2Z" fill="#14143a" stroke="#9a9ab4" stroke-width=".5"/></svg></div>
<div class="a" style="left:262.9px;top:113.7px;width:41.3px;height:31.2px;"><span class="a num" style="left:-8.7px;top:0.2px;">11.</span><div class="a" style="left:0;top:0;width:41.3px;height:31.2px;overflow:hidden;"><div class="a" style="left:0;top:0;width:100%;height:100%;background:#000"></div></div><svg class="a" style="left:45.5px;top:5.5px" width="8" height="23" viewBox="0 0 8 23"><path d="M3.6 1.5 H5.6 V21.4" fill="none" stroke="#e4e4e4" stroke-width="1"/><path d="M5.2 13.6 L1.2 17.6 L5.2 21.2Z" fill="#d81818" stroke="#f0a0a0" stroke-width=".5"/></svg></div>
<div class="a" style="left:384.3px;top:113.7px;width:41.3px;height:31.2px;"><span class="a num" style="left:-8.7px;top:0.2px;">12.</span><div class="a" style="left:0;top:0;width:41.3px;height:31.2px;overflow:hidden;"><div class="a" style="left:0;top:0;width:100%;height:100%;background:#000"></div></div><svg class="a" style="left:45.5px;top:5.5px" width="8" height="23" viewBox="0 0 8 23"><path d="M3.6 1.5 H5.6 V21.4" fill="none" stroke="#e4e4e4" stroke-width="1"/><path d="M5.2 13.6 L1.2 17.6 L5.2 21.2Z" fill="#14143a" stroke="#9a9ab4" stroke-width=".5"/></svg></div>
<!-- bottom panel -->
<div class="a panel" id="ctl" style="left:5.8px;top:157.5px;width:484.5px;height:239.3px;"></div>
<!-- right panel -->
<div class="a panel" id="right" style="left:498px;top:42.8px;width:135.5px;height:310.4px;background:#5c5c61;"></div>

<!-- header strips -->
<div class="a" style="left:9px;top:244.4px;width:452px;height:12px;background:linear-gradient(180deg,#585765 0,#5c5b67 35%,#65656b 70%,#69696c 100%);"></div>
<div class="a" style="left:9px;top:332px;width:452px;height:12.2px;background:linear-gradient(180deg,#585765 0,#5c5b67 35%,#65656b 70%,#69696c 100%);"></div>
<!-- bodies row 1 -->
<div class="a body" style="left:9px;top:168.6px;width:144.5px;height:75.8px;"></div>
<div class="a body" style="left:157.5px;top:168.6px;width:122.5px;height:75.8px;"></div>
<div class="a body" style="left:283px;top:168.6px;width:178px;height:75.8px;"></div>
<!-- row 2 -->
<div class="a body" style="left:9px;top:256.4px;width:223.5px;height:75.6px;"></div>
<div class="a body" style="left:235px;top:256.4px;width:226px;height:75.6px;"></div>
<!-- row 3 -->
<div class="a body" style="left:9px;top:344.2px;width:223.5px;height:49.5px;"></div>
<div class="a body" style="left:235px;top:344.2px;width:226px;height:49.5px;"></div>

<!-- tabs -->
<div class="a tab" style="left:9px;top:159.5px;width:41px;"><b>Visuals</b></div>
<div class="a tab" style="left:157.5px;top:159.5px;width:38px;"><b>Modes</b></div>
<div class="a tab" style="left:283px;top:159.5px;width:41px;"><b>Mapping</b></div>
<div class="a tab" style="left:9px;top:247.5px;width:36px;"><b>Effect</b></div>
<div class="a tab" style="left:9px;top:335.5px;width:49px;"><b>Playback</b></div>


<!-- visuals -->
<div class="a" style="left:12.5px;top:172.6px;width:69.3px;height:51.6px;background:#000;overflow:hidden;"><span class="a" style="left:2.4px;top:20.6px;font-size:12.6px;line-height:14px;color:#fff;white-space:nowrap;transform-origin:0 50%;transform:scaleX(1.004);">NO VISUAL</span></div>
<div class="a lbl" style="left:85px;top:173.6px;">Library</div><div class="a inp" style="left:85.3px;top:183px;width:54.5px;height:10.9px;"><i>0</i></div><div class="a spin" style="left:140.4px;top:183px;width:9.2px;height:10.9px;"></div><div class="a lbl" style="left:85px;top:196.8px;">Visual</div><div class="a inp" style="left:85.3px;top:206.2px;width:54.5px;height:10.6px;"><i>0</i></div><div class="a spin" style="left:140.4px;top:206.2px;width:9.2px;height:10.6px;"></div><div class="a lbl" style="left:85px;top:218.9px;">Text</div><div class="a inp dis" style="left:85.3px;top:229.6px;width:54.5px;height:10.2px;"><i>0</i></div>
<!-- effect -->
<div class="a lbl" style="left:15px;top:260.6px;color:#c8c8d0">..</div><div class="a" style="left:15px;top:275px;width:35px;height:35px;background:#e3e3e6;"><svg class="a" style="left:0;top:0" width="35" height="35" viewBox="0 0 35 35"><circle cx="17.5" cy="17.5" r="9.6" fill="none" stroke="#9fb0cc" stroke-width="2.2"/><path d="M10.8 24.2 L24.2 10.8" stroke="#9fb0cc" stroke-width="2.2"/></svg></div>
<div class="a lbl" style="left:53.8px;top:278px;">Library</div><div class="a inp" style="left:74.5px;top:276.2px;width:19.3px;height:10.8px;"><i>0</i></div><div class="a spin" style="left:94.3px;top:276.2px;width:9.5px;height:10.8px;"></div><div class="a knob np" style="left:105.7px;top:272.9px;--v:0"></div><div class="a lbl" style="left:53.8px;top:296.4px;">Effect</div><div class="a inp" style="left:74.5px;top:294.6px;width:19.3px;height:10.8px;"><i>0</i></div><div class="a spin" style="left:94.3px;top:294.6px;width:9.5px;height:10.8px;"></div><div class="a knob np" style="left:105.7px;top:291.5px;--v:0"></div>
<!-- playback -->
<div class="a lbl" style="left:13px;top:353.2px;">Loop</div><div class="a btn red" style="left:39.2px;top:350.6px;"><svg viewBox="0 0 9.5 9.5"><path d="M1.6 2.2 L4.6 4.75 L1.6 7.3Z M4.9 2.2 L7.9 4.75 L4.9 7.3Z" fill="#fff"/></svg></div><div class="a btn" style="left:52.82px;top:350.6px;"><svg viewBox="0 0 9.5 9.5"><path d="M4.6 2.2 L1.6 4.75 L4.6 7.3Z M7.9 2.2 L4.9 4.75 L7.9 7.3Z" fill="#fff"/></svg></div><div class="a btn" style="left:66.44px;top:350.6px;"><svg viewBox="0 0 9.5 9.5"><path d="M3.4 2 L6.8 4.75 L3.4 7.5Z" fill="#fff"/></svg></div><div class="a btn" style="left:80.06px;top:350.6px;"><svg viewBox="0 0 9.5 9.5"><path d="M6.2 2 L2.8 4.75 L6.2 7.5Z" fill="#fff"/></svg></div><div class="a btn" style="left:93.68px;top:350.6px;"><svg viewBox="0 0 9.5 9.5"><rect x="1.6" y="1.8" width="6.3" height="5.9" fill="#fff"/><rect x="1.6" y="1.8" width="2" height="5.9" fill="#c8c8d8"/></svg></div><div class="a btn" style="left:107.3px;top:350.6px;"><svg viewBox="0 0 9.5 9.5"><rect x="1.6" y="1.8" width="6.3" height="5.9" fill="#fff"/><rect x="5.9" y="1.8" width="2" height="5.9" fill="#c8c8d8"/></svg></div><div class="a btn" style="left:120.92px;top:350.6px;"><svg viewBox="0 0 9.5 9.5"><rect x="1.6" y="1.8" width="1.4" height="5.9" fill="#fff"/><path d="M7.6 2 L3.6 4.75 L7.6 7.5Z" fill="#fff"/></svg></div><div class="a lbl" style="left:13px;top:374.6px;">Segment</div><div class="a" style="left:68px;top:374.4px;width:128.8px;height:7.5px;background:#fff;"></div><svg class="a" style="left:60px;top:366px" width="142" height="24" viewBox="0 0 142 24"><path d="M66.6 3.6 H73.8 L70.2 8Z" fill="#06060c" stroke="#e4e4e4" stroke-width=".6"/><path d="M70 8 V16" stroke="#555" stroke-width=".8"/><path d="M7.8 16.4 V20.6 H4.2Z" fill="#1a1a3a" stroke="#e8e8e8" stroke-width=".7"/><path d="M137 16.4 V20.6 H140.6Z" fill="#1a1a3a" stroke="#e8e8e8" stroke-width=".7"/></svg>

<!-- modes -->
<div class="a lbl" style="left:162.2px;top:175.9px;">Copy Mode</div><div class="a btn red" style="left:194.2px;top:173.8px;"><svg viewBox="0 0 9.5 9.5"><rect x="2.4" y="2.4" width="4.7" height="4.7" fill="#fff"/></svg></div><div class="a btn" style="left:209.2px;top:173.8px;"><svg viewBox="0 0 9.5 9.5"><path d="M4 1.8h1.5v2.2h2.2v1.5h-2.2v2.2h-1.5v-2.2h-2.2v-1.5h2.2z" fill="#fff"/></svg></div><div class="a btn" style="left:222.6px;top:173.8px;"><svg viewBox="0 0 9.5 9.5"><rect x="1.8" y="4" width="5.9" height="1.5" fill="#fff"/></svg></div><div class="a btn" style="left:236.2px;top:173.8px;"><svg viewBox="0 0 9.5 9.5"><path d="M4.75 1.6V7.9 M2.4 2.6 L7.1 6.9 M7.1 2.6 L2.4 6.9" stroke="#fff" stroke-width="1.1"/></svg></div><div class="a btn" style="left:249.8px;top:173.8px;"><svg viewBox="0 0 9.5 9.5"><path d="M6.3 2 L3.1 4.75 L6.3 7.5" fill="none" stroke="#fff" stroke-width="1.5"/></svg></div><div class="a btn" style="left:263.4px;top:173.8px;"><svg viewBox="0 0 9.5 9.5"><path d="M3.2 2 L6.4 4.75 L3.2 7.5" fill="none" stroke="#fff" stroke-width="1.5"/></svg></div><div class="a lbl" style="left:162.2px;top:189.8px;color:#9c9caa">Mask Mode</div><div class="a btn red" style="left:194.2px;top:187.4px;"><svg viewBox="0 0 9.5 9.5"><circle cx="4.75" cy="4.75" r="2.6" fill="none" stroke="#fff" stroke-width="1.2"/></svg></div><div class="a btn" style="left:209.2px;top:187.4px;"><svg viewBox="0 0 9.5 9.5"><text x="1.6" y="7.4" font-size="6.5" font-family="Liberation Sans" font-weight="bold" fill="#fff">a</text><rect x="6" y="5.5" width="1.6" height="1.6" fill="#fff"/></svg></div><div class="a btn" style="left:222.6px;top:187.4px;"><svg viewBox="0 0 9.5 9.5"><text x="1.6" y="7.4" font-size="6.5" font-family="Liberation Sans" font-weight="bold" fill="#fff">a</text><rect x="6" y="5.5" width="1.6" height="1.6" fill="#fff"/></svg></div><div class="a btn" style="left:236.2px;top:187.4px;"><svg viewBox="0 0 9.5 9.5"><circle cx="3" cy="4" r="1.4" fill="#fff"/><circle cx="6.5" cy="4" r="1.4" fill="#fff"/></svg></div><div class="a btn" style="left:249.8px;top:187.4px;"><svg viewBox="0 0 9.5 9.5"><circle cx="3" cy="4" r="1.4" fill="#fff"/><circle cx="6.5" cy="4" r="1.4" fill="#fff"/></svg></div>
<!-- mapping -->
<div class="a lbl" style="left:287px;top:176.2px;">Shape</div><div class="a btn red" style="left:309.4px;top:173.8px;"><svg viewBox="0 0 9.5 9.5"><path d="M2.4 2.2 H7.1 L7.6 4.4 L4.75 7.8 L1.9 4.4Z" fill="#fff"/></svg></div><div class="a btn" style="left:328.2px;top:173.8px;"><svg viewBox="0 0 9.5 9.5"><path d="M2.8 3.2 H6.7 V7.6 H2.8Z M2.8 3.2 L3.8 2 H5.7 L6.7 3.2" fill="#fff"/><path d="M4.75 3.4V7.4" stroke="#17174e" stroke-width=".7"/></svg></div><div class="a btn" style="left:347px;top:173.8px;"><svg viewBox="0 0 9.5 9.5"><circle cx="4.75" cy="4.75" r="2.5" fill="#fff"/></svg></div><div class="a knob" style="left:305.8px;top:187.1px;--v:0"></div><div class="a lbl" style="left:373.4px;top:271.8px;color:#b4b4c0;font-size:7.6px;">X</div><div class="a knob" style="left:378.1px;top:266.9px;--v:0.5"></div><div class="a btn" style="left:397.7px;top:270.0px;"><svg viewBox="0 0 9.5 9.5"><circle cx="3.4" cy="4.75" r="1.6" fill="#fff"/><circle cx="6.6" cy="4.75" r="1" fill="#9a9ac0"/></svg></div><div class="a lbl" style="left:373.4px;top:290.2px;color:#b4b4c0;font-size:7.6px;">Y</div><div class="a knob" style="left:378.1px;top:285.3px;--v:0.5"></div><div class="a btn" style="left:397.7px;top:288.4px;"><svg viewBox="0 0 9.5 9.5"><circle cx="3.4" cy="4.75" r="1.6" fill="#fff"/><circle cx="6.6" cy="4.75" r="1" fill="#9a9ac0"/></svg></div><div class="a lbl" style="left:373.4px;top:308.7px;color:#b4b4c0;font-size:7.6px;">Z</div><div class="a knob" style="left:378.1px;top:303.8px;--v:0.5"></div><div class="a btn" style="left:397.7px;top:306.9px;"><svg viewBox="0 0 9.5 9.5"><circle cx="3.4" cy="4.75" r="1.6" fill="#fff"/><circle cx="6.6" cy="4.75" r="1" fill="#9a9ac0"/></svg></div>
<!-- right: preview, master, status -->
<div class="a" style="left:503.5px;top:48px;width:125.5px;height:93px;background:#000;"></div>
<div class="a tab" style="left:504.5px;top:149.5px;width:36.5px;"><b>Master</b></div>
<div class="a body" style="left:504.5px;top:158px;width:123.5px;height:117px;"></div>
<div class="a tab" style="left:504.5px;top:279px;width:36.5px;"><b>Status</b></div>
<div class="a body" style="left:504.5px;top:287.5px;width:123.5px;height:61.5px;"></div>

<!-- arkaos logo -->
<svg class="a" style="left:520px;top:16.4px" width="96" height="18" viewBox="0 0 96 18"><g fill="none" stroke="#fff" stroke-width="2.5" stroke-linejoin="round" stroke-linecap="butt" style="filter:drop-shadow(0 .6px .5px rgba(40,40,40,.6))">
<path d="M3.5 6.6 H12 Q14.2 6.6 14.2 8.8 V14.4 H5.2 Q3.2 14.4 3.2 12.4 Q3.2 10.5 5.2 10.5 H14"/>
<path d="M18.8 15.5 V8.8 Q18.8 6.6 21 6.6 H25.6"/>
<path d="M28.6 2.6 V15.5 M29 11.4 L42.4 3.6 M34.6 8.6 L43.2 15.4"/>
<path d="M45.8 6.6 H54.3 Q56.5 6.6 56.5 8.8 V14.4 H47.5 Q45.5 14.4 45.5 12.4 Q45.5 10.5 47.5 10.5 H56.3"/>
<rect x="61.8" y="6.6" width="12.4" height="7.8" rx="2.2"/>
<path d="M91.4 6.6 H81.3 Q79.2 6.6 79.2 8.6 Q79.2 10.5 81.3 10.5 H89.2 Q91.4 10.5 91.4 12.5 Q91.4 14.4 89.2 14.4 H78.4"/>
</g></svg>

<!-- master -->
<div class="a lbl" style="left:508px;top:166.6px;">Brightness</div><div class="a knob" style="left:540.9px;top:161.5px;--v:0.58"></div><div class="a lbl" style="left:561.3px;top:166.6px;">Contrast</div><div class="a knob" style="left:587.2px;top:161.8px;--v:0"></div><div class="a btn" style="left:609px;top:164px;"><svg viewBox="0 0 9.5 9.5"><rect x="2" y="2" width="5.5" height="5.5" rx="1.2" fill="#fff"/><circle cx="3.6" cy="3.6" r=".7" fill="#17174e"/><circle cx="5.9" cy="5.9" r=".7" fill="#17174e"/><circle cx="5.9" cy="3.6" r=".7" fill="#17174e"/><circle cx="3.6" cy="5.9" r=".7" fill="#17174e"/></svg></div><div class="a lbl" style="left:508px;top:184.2px;">Mask</div><div class="a inp" style="left:541.3px;top:182px;width:33px;height:11.2px;"><i>0</i></div><div class="a spin" style="left:574.7px;top:182px;width:10.2px;height:11.2px;"></div><div class="a lbl" style="left:508px;top:201.2px;">Keystone X</div><div class="a knob" style="left:540.9px;top:196.1px;--v:0"></div><div class="a knob" style="left:560.7px;top:196.1px;--v:0"></div><div class="a knob" style="left:587.2px;top:196.1px;--v:0"></div><div class="a knob" style="left:607.1px;top:196.1px;--v:0"></div><div class="a lbl" style="left:508px;top:220.6px;">Keystone Y</div><div class="a knob" style="left:540.9px;top:215.3px;--v:0"></div><div class="a knob" style="left:560.7px;top:215.3px;--v:0"></div><div class="a knob" style="left:587.2px;top:215.3px;--v:0"></div><div class="a knob" style="left:607.1px;top:215.3px;--v:0"></div><div class="a lbl" style="left:508px;top:239.8px;">Width</div><div class="a knob" style="left:540.9px;top:234.8px;--v:0"></div><div class="a lbl" style="left:561.3px;top:239.8px;">Curve</div><div class="a knob" style="left:587.2px;top:234.7px;--v:0.52"></div><div class="a btn" style="left:609.2px;top:238.2px;"><svg viewBox="0 0 9.5 9.5"><rect x="1.8" y="2.8" width="5.9" height="3.9" fill="none" stroke="#fff" stroke-width=".9"/><path d="M4.75 2.8V6.7" stroke="#fff" stroke-width=".8"/></svg></div><div class="a lbl" style="left:509.3px;top:259.2px;">Volume</div><div class="a knob" style="left:540.9px;top:254.0px;--v:0.58"></div>
<!-- status -->
<div class="a lbl" style="left:510.4px;top:298.8px;transform:scaleX(.78);">FPS</div><div class="a" style="left:523.8px;top:293.8px;width:82px;height:8px;box-sizing:border-box;border:.8px solid #b4b4bc;background:#464151;"><span class="a lbl" style="left:1.6px;top:-.6px;color:#a8a8b0;font-size:7.2px;">gpu 60.76</span></div><div class="a" style="left:523.8px;top:303px;width:82px;height:8.2px;box-sizing:border-box;border:.8px solid #8c8c94;background:#c2c2c4;"><span class="a lbl" style="left:1.6px;top:-.5px;color:#6e6e78;font-size:7.2px;">cpu 223.02</span></div><div class="a" style="left:525.1px;top:320.1px;width:7.4px;height:7.4px;border-radius:50%;background:radial-gradient(circle at 40% 35%,#fff 0,#d8d8dc 45%,#8e8e96 100%);"></div><div class="a lbl" style="left:535px;top:319.9px;transform:scaleX(.79);">DMX act</div><div class="a" style="left:560.1px;top:320.1px;width:7.4px;height:7.4px;border-radius:50%;background:radial-gradient(circle at 40% 35%,#9cf06a 0,#3fb01c 45%,#1c6a08 100%);"></div><div class="a lbl" style="left:570px;top:319.9px;transform:scaleX(.79);">MSEX</div><div class="a" style="left:587.5px;top:320.1px;width:7.4px;height:7.4px;border-radius:50%;background:radial-gradient(circle at 40% 35%,#fff 0,#d8d8dc 45%,#8e8e96 100%);"></div><div class="a lbl" style="left:597.5px;top:319.9px;transform:scaleX(.79);">LED</div>
<!-- mediamaster logo -->
<svg class="a" style="left:522px;top:355px" width="90" height="46" viewBox="0 0 90 46">
<rect x="4.8" y="4.4" width="77.6" height="35.2" rx="17.6" fill="none" stroke="#fff" stroke-width="2.4"/>
<rect x="33.4" y="36" width="20" height="7" fill="#727272"/>
<path d="M11.4 21.8 Q11 11.2 16 8.6 Q19.6 12 23.3 15.8 Q27 12 30.6 8.6 Q35.6 11.2 35.2 21.8 Q33.4 18.4 30.8 16.2 Q27 19.6 23.3 23 Q19.6 19.6 15.8 16.2 Q13.2 18.4 11.4 21.8Z" fill="#fff"/>
<path d="M13.4 33.4 Q13 23 17.6 20.4 Q20.4 23.6 23.4 27.2 Q26.4 23.6 29.2 20.4 Q33.8 23 33.4 33.4 Q31.8 30.2 29.4 28 Q26.4 31 23.4 34.2 Q20.4 31 17.4 28 Q15 30.2 13.4 33.4Z" fill="#fff"/>
<text x="36" y="20.6" font-family="Liberation Sans" font-size="13.4" fill="#fff" stroke="#fff" stroke-width=".35" textLength="34" lengthAdjust="spacingAndGlyphs">edia</text>
<text x="33.8" y="30.7" font-family="Liberation Sans" font-size="13.4" fill="#fff" stroke="#fff" stroke-width=".35" textLength="42.6" lengthAdjust="spacingAndGlyphs">aster</text>
<text x="36" y="41.2" font-family="Liberation Sans" font-style="italic" font-weight="bold" font-size="7.4" fill="#fff" textLength="16" lengthAdjust="spacingAndGlyphs">pro</text>
</svg>

<div class="a knob" style="left:134.5px;top:347.6px;--v:0"></div>
<!-- dialog -->
<div id="dlg" class="a"><div class="a gl"></div><div class="a lb"></div><div class="a rb"></div><div class="a bb"></div><div class="a hl"></div><span class="a" style="left:4.2px;top:2.9px;font-size:8px;line-height:9px;color:#2a3038;white-space:nowrap;transform-origin:0 50%;transform:scaleX(.85);text-shadow:0 0 3px #fff,0 0 3px #fff;">Output</span><div class="a" style="left:214.4px;top:.4px;width:26.6px;height:10.3px;border-radius:0 0 2px 2px;background:linear-gradient(180deg,#dc9484 0,#cc604c 45%,#b8341f 50%,#bc402a 100%);box-shadow:0 0 0 .6px #4a1a18,inset 0 0 0 .6px rgba(255,220,210,.55);"><svg class="a" style="left:9.8px;top:2.2px" width="7" height="6" viewBox="0 0 7 6"><path d="M1.2 .8 L5.8 5.2 M5.8 .8 L1.2 5.2" stroke="#fff" stroke-width="1.5"/></svg></div></div>
<div id="cl" class="a"></div>
<div class="a dt" style="left:137.6px;top:221.3px;">Surface:</div><div class="a pb" style="left:163.9px;top:218.8px;width:45.4px;height:11.2px;"><span style="text-align:left;left:3.6px;">CDM Group</span><svg class="a" style="right:3px;top:4.2px" width="5" height="3" viewBox="0 0 5 3"><path d="M.3 .2 H4.7 L2.5 2.8Z" fill="#111"/></svg></div><div class="a pb def" style="left:212px;top:218.8px;width:20.2px;height:11.2px;"><span>New</span></div><div class="a pb" style="left:235.3px;top:218.8px;width:33.6px;height:11.2px;"><span>Duplicate</span></div><div class="a pb" style="left:271.8px;top:218.8px;width:26.4px;height:11.2px;"><span>Delete</span></div><div class="a pb" style="left:301.4px;top:218.8px;width:30.4px;height:11.2px;"><span>Rename</span></div>
<div class="a dt" style="left:137.6px;top:236.2px;">Surfaces:</div><div class="a" style="left:138.2px;top:247.6px;width:219.4px;height:81.6px;background:#fff;box-shadow:inset 0 0 0 .7px #868a92;"></div><div class="a" style="left:149px;top:315px;width:198.4px;height:8.3px;background:#3797f2;"></div><div class="a cb" style="left:141.1px;top:250.20px;"></div><div class="a dt" style="left:150.2px;top:249.70px;">Surface 13</div><div class="a cb" style="left:141.1px;top:258.40px;"></div><div class="a dt" style="left:150.2px;top:257.90px;">Surface 14</div><div class="a cb on" style="left:141.1px;top:266.60px;"></div><div class="a dt" style="left:150.2px;top:266.10px;">Surface 15</div><div class="a cb on" style="left:141.1px;top:274.80px;"></div><div class="a dt" style="left:150.2px;top:274.30px;">Surface 16</div><div class="a cb on" style="left:141.1px;top:283.00px;"></div><div class="a dt" style="left:150.2px;top:282.50px;">Surface 17</div><div class="a cb on" style="left:141.1px;top:291.20px;"></div><div class="a dt" style="left:150.2px;top:290.70px;">Surface 20</div><div class="a cb on" style="left:141.1px;top:299.40px;"></div><div class="a dt" style="left:150.2px;top:298.90px;">Surface 21</div><div class="a cb on" style="left:141.1px;top:307.60px;"></div><div class="a dt" style="left:150.2px;top:307.10px;">Surface 22</div><div class="a cb" style="left:141.1px;top:315.80px;"></div><div class="a dt" style="left:150.2px;top:315.30px;color:#fff;">Surface 23</div><div class="a" style="left:347.6px;top:248.3px;width:9.4px;height:80.2px;background:#f1f1f1;box-shadow:inset .6px 0 0 #e2e2e2;"></div><div class="a" style="left:348.8px;top:294.2px;width:7.8px;height:23.4px;border-radius:1.2px;background:linear-gradient(90deg,#f2f2f2 0,#e2e2e2 50%,#cfcfcf 100%);box-shadow:inset 0 0 0 .6px #989898;"><div class="a" style="left:2.2px;top:10px;width:3.4px;height:3.6px;background:repeating-linear-gradient(180deg,#777 0,#777 .6px,transparent .6px,transparent 1.5px);"></div></div><svg class="a" style="left:350.4px;top:250.6px" width="5" height="3" viewBox="0 0 5 3"><path d="M.4 2.8 H4.6 L2.5 .3Z" fill="#333"/></svg><svg class="a" style="left:350.4px;top:323.2px" width="5" height="3" viewBox="0 0 5 3"><path d="M.4 .2 H4.6 L2.5 2.7Z" fill="#333"/></svg><div class="a pb" style="left:321.4px;top:341.4px;width:40.2px;height:11.2px;"><span>Close</span></div>

</body>
</html>
